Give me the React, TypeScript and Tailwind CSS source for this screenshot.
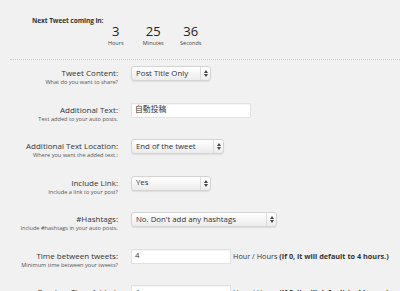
import React from 'react'

/* 자동 트윗 설정 화면 — 카운트다운 + 옵션 폼 */

const font = { fontFamily: '"Open Sans", "Noto Sans CJK JP", sans-serif' }

function Select({ value, width }: { value: string; width: string }) {
  return (
    <div
      className={`flex h-[15px] items-stretch rounded-[3px] border border-[#d4d4d4] bg-gradient-to-b from-white to-[#ececec] shadow-[0_1px_1px_rgba(0,0,0,0.08)] ${width}`}
    >
      <span className="flex flex-1 items-center pl-[4px] text-[7.8px] leading-none text-[#333]">{value}</span>
      <span className="flex w-[10px] flex-col items-center justify-center gap-[1px] border-l border-[#dcdcdc]">
        <span className="block h-0 w-0 border-x-[2px] border-b-[3px] border-x-transparent border-b-[#444]" />
        <span className="block h-0 w-0 border-x-[2px] border-t-[3px] border-x-transparent border-t-[#444]" />
      </span>
    </div>
  )
}

function Input({ value, width }: { value: string; width: string }) {
  return (
    <div
      className={`flex h-[15px] items-center border border-[#e2e2e2] bg-white pl-[3px] text-[7.8px] leading-none text-[#333] shadow-[inset_0_1px_1px_rgba(0,0,0,0.04)] ${width}`}
    >
      {value}
    </div>
  )
}

function Row({ label, sub, children }: { label: string; sub: string; children: React.ReactNode }) {
  return (
    <div className="flex h-[36.5px] items-start">
      <div className="flex w-[118px] shrink-0 flex-col items-end pt-[2px] text-right">
        <span className="text-[8px] leading-[10px] text-[#333]">{label}</span>
        <span className="whitespace-nowrap text-[5.6px] leading-[9px] text-[#555]">{sub}</span>
      </div>
      <div className="ml-[13px] flex items-center">{children}</div>
    </div>
  )
}

const countdown = [
  { n: '3', l: 'Hours' },
  { n: '25', l: 'Minutes' },
  { n: '36', l: 'Seconds' },
]

export default function App() {
  return (
    <div className="h-[291px] w-[400px] overflow-hidden bg-[#f1f1f1]" style={font}>
      {/* 다음 트윗 카운트다운 */}
      <div className="flex h-[59px] items-start">
        <span className="ml-[32px] mt-[16px] w-[72px] whitespace-nowrap text-[6.6px] font-bold leading-[10px] tracking-[-0.1px] text-[#333]">
          Next Tweet coming in:
        </span>
        <div className="ml-[-7px] mt-[24px] flex">
          {countdown.map((c) => (
            <div key={c.l} className="flex w-[37.5px] flex-col items-center">
              <span className="text-[13px] leading-[15px] text-[#222]">{c.n}</span>
              <span className="mt-[1px] text-[5.5px] leading-[7px] text-[#444]">{c.l}</span>
            </div>
          ))}
        </div>
      </div>
      <div className="ml-[10px] border-t border-dotted border-[#c8c8c8]" />

      {/* 설정 폼 */}
      <div className="pt-[6px]">
        <Row label="Tweet Content:" sub="What do you want to share?">
          <Select value="Post Title Only" width="w-[80px]" />
        </Row>
        <Row label="Additional Text:" sub="Text added to your auto posts.">
          <Input value="自動投稿" width="w-[120px]" />
        </Row>
        <Row label="Additional Text Location:" sub="Where you want the added text.:">
          <Select value="End of the tweet" width="w-[93px]" />
        </Row>
        <Row label="Include Link:" sub="Include a link to your post?">
          <Select value="Yes" width="w-[80px]" />
        </Row>
        <Row label="#Hashtags:" sub="Include #hashtags in your auto posts.">
          <Select value="No. Don't add any hashtags" width="w-[146px]" />
        </Row>
        <Row label="Time between tweets:" sub="Minimum time between your tweets?">
          <Input value="4" width="w-[100px]" />
          <span className="ml-[2px] whitespace-nowrap text-[7.3px] text-[#333]">
            Hour / Hours <b>(If 0, it will default to 4 hours.)</b>
          </span>
        </Row>
        <Row label="Random Time Added:" sub="Random time added to make it look natural.">
          <Input value="4" width="w-[100px]" />
          <span className="ml-[2px] whitespace-nowrap text-[7.3px] text-[#333]">
            Hour / Hours <b>(If 0, it will default to 4 hours.)</b>
          </span>
        </Row>
      </div>
    </div>
  )
}
